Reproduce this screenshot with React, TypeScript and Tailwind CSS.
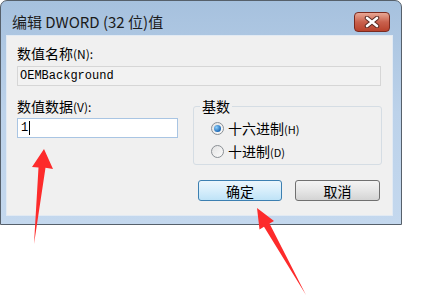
import React from "react";

const cjk = "font-['Noto_Sans_CJK_SC','Noto_Sans',sans-serif]";

function Radio({ checked, label, hotkey }: { checked?: boolean; label: string; hotkey: string }) {
  return (
    <div className="flex items-center h-[16px]">
      <div className="w-[13px] h-[13px] rounded-full border border-[#8a8f94] bg-gradient-to-br from-[#e3e3e3] to-[#fbfbfb] flex items-center justify-center">
        {checked && (
          <div className="w-[7px] h-[7px] rounded-full bg-[radial-gradient(circle_at_35%_35%,#8fd0fb,#1d69b6_70%)]" />
        )}
      </div>
      <span className="ml-[4px] text-[14px] leading-[16px] text-black">
        {label}
        <span className="text-[11px]">({hotkey})</span>
      </span>
    </div>
  );
}

export default function App() {
  return (
    <div className={`relative w-[438px] h-[300px] bg-white overflow-hidden ${cjk}`}>
      <div className="w-[402px] h-[225px] rounded-t-[7px] border border-[#56606b] bg-gradient-to-b from-[#a6c1de] via-[#bcd2ea] to-[#c4d8ee] flex flex-col pl-[5px] pr-[8px] pb-[8px]">
        <div className="h-[34px] pt-[8px] flex items-center justify-between pl-[6px] pr-[3px]">
          <span className="text-[15px] leading-[20px] text-[#1b1b1b]">编辑 DWORD (32 位)值</span>
          <div className="w-[36px] h-[20px] rounded-[4px] border border-[#7a2a1f] bg-gradient-to-b from-[#e8a795] via-[#c9614d] to-[#b8422c] flex items-center justify-center">
            <svg width="16" height="12" viewBox="0 0 16 12">
              <path d="M3 2 L13 10 M13 2 L3 10" stroke="#5a2a22" strokeWidth="4.5" strokeLinecap="round" />
              <path d="M3 2 L13 10 M13 2 L3 10" stroke="#ffffff" strokeWidth="2.6" strokeLinecap="round" />
            </svg>
          </div>
        </div>
        <div className="flex-1 bg-[#f0f0f0] border border-[#e2eaf3] pl-[10px] pt-[9px]">
          <div className="text-[14px] leading-[16px] text-black">
            数值名称<span className="text-[12px]">(N):</span>
          </div>
          <div className="mt-[4px] w-[364px] h-[20px] border border-[#d6d6d6] bg-[#f2f2f2] flex items-center pl-[2px] font-['Liberation_Mono',monospace] text-[12px] text-black">
            OEMBackground
          </div>
          <div className="mt-[12px] flex">
            <div className="w-[161px]">
              <div className="text-[14px] leading-[16px] text-black">
                数值数据<span className="text-[12px]">(V):</span>
              </div>
              <div className="mt-[3px] h-[20px] border border-[#a9c5e3] bg-white flex items-center pl-[3px] font-['Liberation_Mono',monospace] text-[12px] text-black">
                1<span className="ml-[1px] w-[1px] h-[14px] bg-black" />
              </div>
            </div>
            <div className="ml-[15px] w-[189px]">
              <fieldset className="h-[67px] border border-[#d5dde4] rounded-[3px]">
                <legend className="ml-[6px] px-[2px] text-[14px] leading-[16px] text-black">基数</legend>
                <div className="ml-[17px] mt-[6px] flex flex-col gap-[7px]">
                  <Radio checked label="十六进制" hotkey="H" />
                  <Radio label="十进制" hotkey="D" />
                </div>
              </fieldset>
              <div className="mt-[15px] flex">
                <button className="ml-[5px] w-[84px] h-[21px] rounded-[3px] border border-[#3c7fb1] bg-gradient-to-b from-[#ecf6fc] via-[#d7eefb] to-[#bfe3f7] text-[14px] leading-[16px] text-black">
                  确定
                </button>
                <button className="ml-[13px] w-[85px] h-[21px] rounded-[3px] border border-[#707070] bg-gradient-to-b from-[#f4f4f4] via-[#e6e6e6] to-[#d4d4d4] text-[14px] leading-[16px] text-black">
                  取消
                </button>
              </div>
            </div>
          </div>
        </div>
      </div>
      <svg className="absolute inset-0 pointer-events-none" width="438" height="300" viewBox="0 0 438 300">
        <polygon points="44,149 53,169 45.5,167.8 34,244 38.5,167.4 32,167" fill="#fd2b2b" />
        <polygon points="257,208 274,221 269.5,223.5 306,295 264,226.8 259.5,229.5" fill="#fd2b2b" />
      </svg>
    </div>
  );
}
